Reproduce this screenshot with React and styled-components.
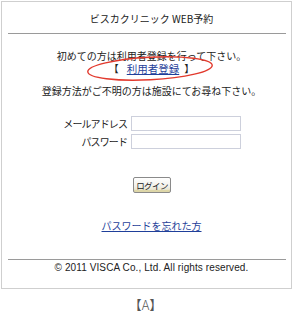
import React from "react";
import styled, { createGlobalStyle } from "styled-components";

const Global = createGlobalStyle`
  html, body { margin: 0; padding: 0; background: #fff; }
  body {
    font-family: "Noto Sans CJK JP", "Noto Sans", sans-serif;
    color: #222;
    width: 295px;
  }
`;

const Frame = styled.div`
  margin: 1px 0 0 1px;
  width: 291px;
  box-sizing: border-box;
  border: 1px solid #cfcfcf;
  padding-bottom: 14px;
`;

const Block = styled.div`
  padding-left: 10px;
  text-align: center;
  font-size: 10px;
  line-height: 13px;
`;

const Title = styled(Block)`
  padding-top: 10px;
  line-height: 14px;
`;

const Rule = styled.div`
  height: 1px;
  background: #9a9a9a;
  margin: ${(p) => p.$top}px 5px 0 6px;
`;

const Lead = styled(Block)`
  margin-top: ${(p) => p.$top || 0}px;
`;

const Bracket = styled.span`
  position: relative;
  display: inline-flex;
  align-items: center;
  line-height: 13px;
`;

const Mark = styled.span`
  display: inline-block;
  margin: ${(p) => p.$m};
`;

const Ellipse = styled.svg`
  position: absolute;
  left: -22px;
  top: -6px;
  pointer-events: none;
  overflow: visible;
`;

const Link = styled.a`
  color: #1f3f9a;
  text-decoration: underline;
  text-underline-offset: 1px;
  cursor: pointer;
  font-size: ${(p) => p.$size || 10}px;
`;

const Form = styled.div`
  margin-top: 19px;
  display: grid;
  grid-template-columns: 125px 110px;
  column-gap: 4px;
  row-gap: 3px;
  align-items: center;
`;

const Label = styled.label`
  text-align: right;
  font-size: 10px;
  letter-spacing: -0.9px;
  line-height: 15px;
`;

const Input = styled.input`
  box-sizing: border-box;
  width: 110px;
  height: 15px;
  margin: 0;
  padding: 0 2px;
  border: 1px solid #cdd0dc;
  background: #fff;
  outline: none;
`;

const ButtonRow = styled.div`
  margin-top: 28px;
  display: flex;
  justify-content: center;
  padding-left: 11px;
`;

const Button = styled.button`
  box-sizing: border-box;
  width: 38px;
  height: 16px;
  margin: 0;
  padding: 0;
  font-family: "Noto Sans CJK JP", sans-serif;
  font-size: 8.5px;
  line-height: 12px;
  letter-spacing: -0.6px;
  color: #222;
  border: 1px solid #8a8a8a;
  border-radius: 2px;
  background: linear-gradient(#ffffff, #f1f0ea 60%, #e2dcb8);
  box-shadow: inset 0 -2px 0 #ddd6a8;
`;

const LinkRow = styled(Block)`
  margin-top: 26px;
`;

const Copy = styled.div`
  margin-top: 1px;
  padding-left: 10px;
  text-align: center;
  font-family: "Liberation Sans", Arial, sans-serif;
  font-size: 10px;
  letter-spacing: 0.1px;
  line-height: 13px;
  color: #222;
`;

const Caption = styled.div`
  margin-top: 9px;
  text-align: center;
  font-size: 13px;
  font-weight: 300;
  line-height: 14px;
  color: #555;
  padding-right: 4px;
`;

export default function App() {
  return (
    <>
      <Global />
      <Frame>
        <Title>ビスカクリニック WEB予約</Title>
        <Rule $top={7} />
        <Lead $top={15}>初めての方は利用者登録を行って下さい。</Lead>
        <Lead>
          <Bracket>
            <Mark $m="0 8px 0 0">【</Mark>
            <Link $size={10.5}>利用者登録</Link>
            <Mark $m="0 0 0 5px">】</Mark>
            <Ellipse width="126" height="25" viewBox="0 0 126 25">
              <ellipse
                cx="63"
                cy="12.5"
                rx="62.3"
                ry="11.3"
                fill="none"
                stroke="#e23a2e"
                strokeWidth="1.4"
                transform="rotate(-3 63 12.5)"
              />
            </Ellipse>
          </Bracket>
        </Lead>
        <Lead $top={9}>登録方法がご不明の方は施設にてお尋ね下さい。</Lead>
        <Form>
          <Label htmlFor="mail">メールアドレス</Label>
          <Input id="mail" type="text" />
          <Label htmlFor="pw">パスワード</Label>
          <Input id="pw" type="password" />
        </Form>
        <ButtonRow>
          <Button>ログイン</Button>
        </ButtonRow>
        <LinkRow>
          <Link>パスワードを忘れた方</Link>
        </LinkRow>
        <Rule $top={27} />
        <Copy>© 2011 VISCA Co., Ltd. All rights reserved.</Copy>
      </Frame>
      <Caption>【A】</Caption>
    </>
  );
}
